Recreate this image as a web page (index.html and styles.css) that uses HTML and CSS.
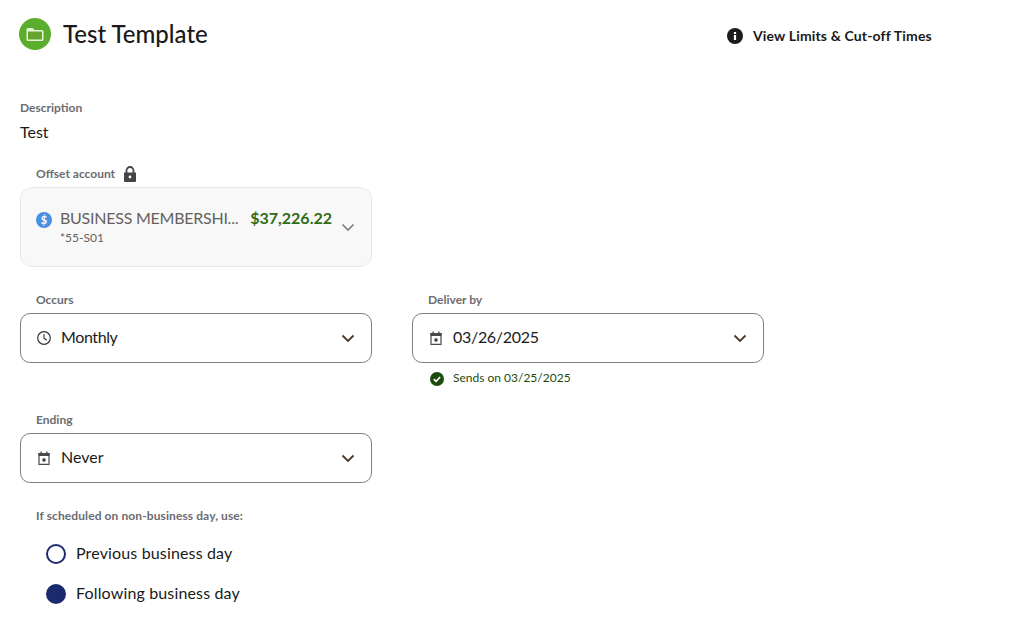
FILE: index.html
```html
<!DOCTYPE html>
<html lang="en">
<head>
<meta charset="utf-8">
<title>Test Template</title>
<link rel="stylesheet" href="styles.css">
</head>
<body>
<header class="header">
  <div class="title-group">
    <span class="folder-badge">
      <svg width="20" height="20" viewBox="0 0 20 20"><path d="M1.500 5.500A1.500 1.500 0 0 1 3 4h4.500l2 2H17a1.500 1.500 0 0 1 1.500 1.500v8A1.500 1.500 0 0 1 17 17H3a1.500 1.500 0 0 1-1.500-1.500z" fill="#e8f5dc"/><rect x="3" y="7.500" width="14" height="8" fill="#66a32a"/></svg>
    </span>
    <h1 class="title">Test Template</h1>
  </div>
  <a class="limits-link">
    <svg width="16" height="16" viewBox="0 0 16 16"><circle cx="8" cy="8" r="8" fill="#1c1c1c"/><rect x="6.900" y="7" width="2.200" height="5" fill="#fff"/><rect x="6.900" y="4" width="2.200" height="2" fill="#fff"/></svg>
    <span>View Limits &amp; Cut-off Times</span>
  </a>
</header>
<main class="content">
  <section class="description">
    <div class="desc-label">Description</div>
    <div class="desc-value">Test</div>
  </section>
  <section class="field account-field">
    <div class="label label-row">Offset account
      <svg width="14" height="16" viewBox="0 0 14 16"><path d="M3.500 7V4.500a3.500 3.500 0 0 1 7 0V7" fill="none" stroke="#444" stroke-width="1.800"/><path d="M1 6.500h12V15a1 1 0 0 1-1 1H2a1 1 0 0 1-1-1z" fill="#444"/><circle cx="7" cy="11" r="1.400" fill="#fff"/></svg>
    </div>
    <div class="account-card">
      <div class="account-main">
        <div class="account-line">
          <span class="dollar-badge">$</span>
          <span class="account-name">BUSINESS MEMBERSHI...</span>
          <span class="balance">$37,226.22</span>
        </div>
        <div class="account-number">*55-S01</div>
      </div>
      <svg class="chev" width="16" height="16" viewBox="0 0 16 16"><path d="M2.500 5.500 8 11l5.500-5.500" fill="none" stroke="#7a8088" stroke-width="1.700"/></svg>
    </div>
  </section>
  <section class="row">
    <div class="field">
      <div class="label">Occurs</div>
      <div class="select">
        <svg class="select-icon" width="16" height="16" viewBox="0 0 16 16"><circle cx="8" cy="8" r="6.300" fill="none" stroke="#333" stroke-width="1.200"/><path d="M8 4v4.300l2.800 2" fill="none" stroke="#333" stroke-width="1.100"/></svg>
        <span class="select-value value-month">Monthly</span>
        <svg class="chev" width="16" height="16" viewBox="0 0 16 16"><path d="M2.500 5.500 8 11l5.500-5.500" fill="none" stroke="#4a3a2a" stroke-width="1.800"/></svg>
      </div>
    </div>
    <div class="field">
      <div class="label">Deliver by</div>
      <div class="select">
        <svg class="select-icon" width="16" height="16" viewBox="0 0 16 16"><path d="M3 3.500h10v10.800H3z" fill="none" stroke="#4a4a4a" stroke-width="1.200"/><path d="M2.500 3h11v3h-11z" fill="#4a4a4a"/><rect x="4.500" y="1.500" width="1.400" height="2" fill="#4a4a4a"/><rect x="10.100" y="1.500" width="1.400" height="2" fill="#4a4a4a"/><rect x="6.500" y="8.500" width="3" height="3" fill="#333"/></svg>
        <span class="select-value value-date">03/26/2025</span>
        <svg class="chev" width="16" height="16" viewBox="0 0 16 16"><path d="M2.500 5.500 8 11l5.500-5.500" fill="none" stroke="#4a3a2a" stroke-width="1.800"/></svg>
      </div>
      <div class="hint">
        <svg class="hint-icon" width="14" height="14" viewBox="0 0 14 14"><circle cx="7" cy="7" r="7" fill="#1e4a0e"/><path d="M3.800 7.200 6 9.300l4.200-4.300" fill="none" stroke="#fff" stroke-width="1.600"/></svg>
        <span>Sends on 03/25/2025</span>
      </div>
    </div>
  </section>
  <section class="field ending-field">
    <div class="label">Ending</div>
    <div class="select">
      <svg class="select-icon" width="16" height="16" viewBox="0 0 16 16"><path d="M3 3.500h10v10.800H3z" fill="none" stroke="#4a4a4a" stroke-width="1.200"/><path d="M2.500 3h11v3h-11z" fill="#4a4a4a"/><rect x="4.500" y="1.500" width="1.400" height="2" fill="#4a4a4a"/><rect x="10.100" y="1.500" width="1.400" height="2" fill="#4a4a4a"/><rect x="6.500" y="8.500" width="3" height="3" fill="#333"/></svg>
      <span class="select-value">Never</span>
      <svg class="chev" width="16" height="16" viewBox="0 0 16 16"><path d="M2.500 5.500 8 11l5.500-5.500" fill="none" stroke="#4a3a2a" stroke-width="1.800"/></svg>
    </div>
  </section>
  <section class="radios">
    <div class="label radios-label">If scheduled on non-business day, use:</div>
    <div class="radio-row"><span class="radio"></span><span class="radio-text">Previous business day</span></div>
    <div class="radio-row"><span class="radio checked"></span><span class="radio-text">Following business day</span></div>
  </section>
</main>
</body>
</html>
```
FILE: styles.css
```css
* { box-sizing: border-box; }
html, body { margin: 0; padding: 0; }
body {
  font-family: Lato, "Liberation Sans", sans-serif;
  color: #1a1a1a;
  background: #fff;
  height: 640px;
  overflow: hidden;
}
.header {
  display: flex;
  align-items: flex-start;
  padding: 18px 0 0 19px;
}
.title-group {
  display: flex;
  align-items: center;
  gap: 12px;
  width: 708px;
}
.folder-badge {
  width: 32px;
  height: 32px;
  border-radius: 50%;
  background: #5aae2b;
  display: flex;
  align-items: center;
  justify-content: center;
}
.title {
  margin: 0;
  font-size: 24px;
  line-height: 32px;
  font-weight: 500;
}
.limits-link {
  display: flex;
  align-items: center;
  gap: 10px;
  font-size: 14px;
  font-weight: 700;
  line-height: 20px;
  letter-spacing: .15px;
  margin-top: 8px;
}
.content {
  padding: 50px 0 0 20px;
}
.desc-label {
  font-size: 12px;
  line-height: 16px;
  font-weight: 700;
  color: #6b6b70;
}
.desc-value {
  font-size: 16px;
  line-height: 20px;
  margin-top: 6px;
}
.field { width: 352px; }
.label {
  font-size: 12px;
  line-height: 16px;
  font-weight: 700;
  color: #6b6b70;
  padding-left: 16px;
}
.label-row {
  display: flex;
  align-items: center;
  gap: 8px;
}
.account-field { margin-top: 24px; }
.account-card {
  margin-top: 5px;
  height: 80px;
  background: #f8f8f8;
  border: 1px solid #e8e8e8;
  border-radius: 12px;
  padding: 0 15px;
  display: flex;
  align-items: center;
  justify-content: space-between;
}
.account-main {
  width: 296px;
  margin-bottom: 2px;
}
.account-line {
  display: flex;
  align-items: center;
  line-height: 20px;
  padding-top: 1px;
}
.dollar-badge {
  width: 16px;
  height: 16px;
  border-radius: 50%;
  background: #4a90e2;
  color: #fff;
  font-size: 11px;
  font-weight: 700;
  text-align: center;
  line-height: 16px;
  margin: 2px 8px 0 0;
}
.account-name {
  font-size: 16px;
  letter-spacing: -.25px;
  color: #66615e;
  flex: 1;
  padding-bottom: 2px;
}
.balance {
  font-size: 16px;
  font-weight: 700;
  color: #2e6b12;
  padding-bottom: 2px;
}
.account-number {
  margin: 0 0 0 24px;
  font-size: 12px;
  line-height: 16px;
  color: #66615e;
}
.row {
  display: flex;
  gap: 40px;
  margin-top: 25px;
}
.select {
  margin-top: 5px;
  height: 50px;
  border: 1px solid #807f7d;
  border-radius: 10px;
  padding: 0 15px;
  display: flex;
  align-items: center;
}
.select-icon { margin-right: 9px; }
.select-value {
  flex: 1;
  font-size: 16px;
  padding-bottom: 4px;
}
.value-month { letter-spacing: -.4px; }
.value-date { letter-spacing: -.3px; }
.hint {
  display: flex;
  align-items: center;
  gap: 9px;
  padding: 7px 0 0 18px;
  font-size: 12px;
  line-height: 16px;
  color: #1e4a0e;
}
.hint-icon { margin-top: 2px; }
.ending-field { margin-top: 26px; }
.radios { margin-top: 25px; }
.radios-label { letter-spacing: .1px; }
.radio-row {
  display: flex;
  align-items: center;
  gap: 10px;
  padding-left: 26px;
  font-size: 16px;
  height: 20px;
  margin-top: 20px;
}
.radios-label + .radio-row { margin-top: 20px; }
.radio-text {
  letter-spacing: .15px;
  padding-bottom: 3px;
}
.radio {
  width: 20px;
  height: 20px;
  border-radius: 50%;
  border: 2px solid #1b2a6b;
}
.radio.checked { background: #1b2a6b; }
```
